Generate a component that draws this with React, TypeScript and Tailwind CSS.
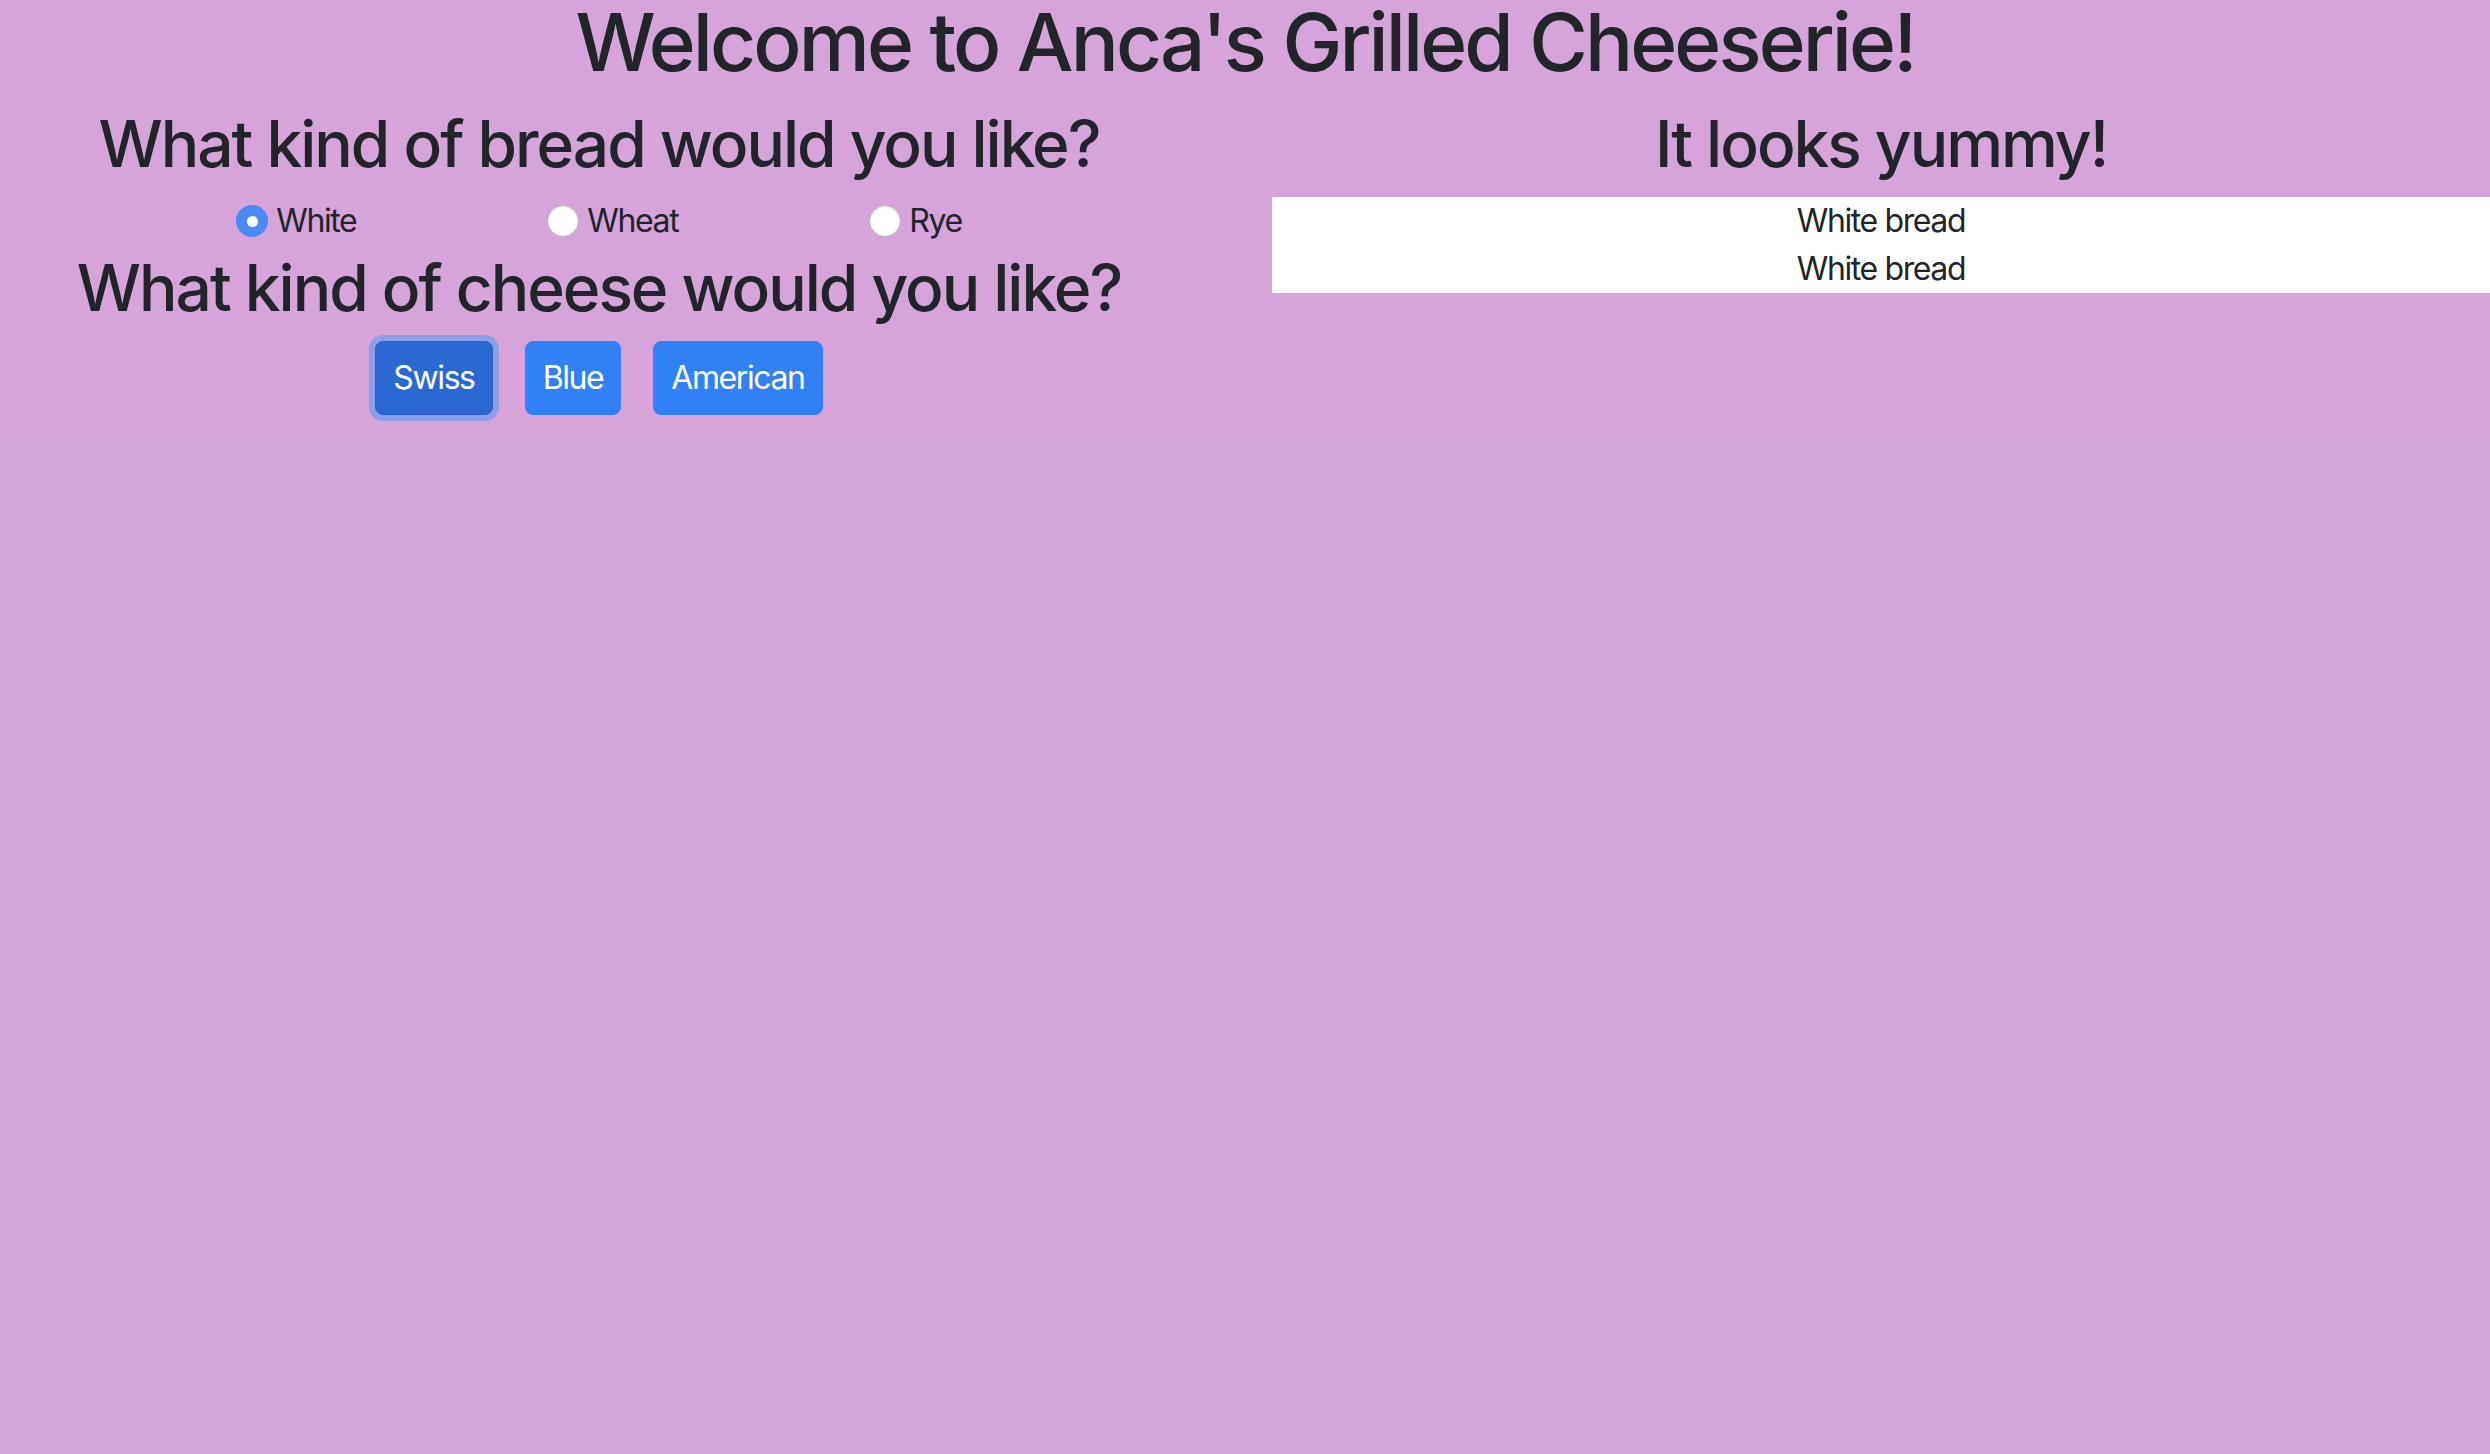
import React from 'react';

const breads = ['White', 'Wheat', 'Rye'];
const cheeses = ['Swiss', 'Blue', 'American'];

function Radio({ label, checked }: { label: string; checked: boolean }) {
  return (
    <label className="flex items-center gap-[8px]">
      {checked ? (
        <span className="flex h-[32px] w-[32px] items-center justify-center rounded-full bg-[#4a8af4]">
          <span className="h-[11px] w-[11px] rounded-full bg-white" />
        </span>
      ) : (
        <span className="h-[32px] w-[32px] rounded-full border border-[#b9b2bb] bg-white shadow-[inset_0_1px_2px_rgba(0,0,0,0.12)]" />
      )}
      <span>{label}</span>
    </label>
  );
}

export default function App() {
  return (
    <div
      className="min-h-screen bg-[#d3a4d8] text-[#212529]"
      style={{ fontFamily: 'Inter, "Liberation Sans", sans-serif' }}
    >
      <div className="bg-[#d6a3da] pb-[22px]">
        <h1 className="text-center text-[80px] font-medium leading-[84px] tracking-[-2.9px]">
          Welcome to Anca's Grilled Cheeserie!
        </h1>
        <div className="flex">
          <div className="flex w-[1198px] flex-col items-center">
            <h2 className="mt-[28px] text-[64px] font-medium leading-[64px] tracking-[-2px]">
              What kind of bread would you like?
            </h2>
            <div className="mt-[21px] flex h-[48px] items-center gap-[191px] text-[32px] leading-[48px] tracking-[-1.4px]">
              {breads.map((b, i) => (
                <Radio key={b} label={b} checked={i === 0} />
              ))}
            </div>
            <h2 className="mt-[11px] text-[64px] font-medium leading-[64px] tracking-[-2px]">
              What kind of cheese would you like?
            </h2>
            <div className="mt-[21px] flex gap-[32px]">
              {cheeses.map((c, i) => (
                <button
                  key={c}
                  className={
                    i === 0
                      ? 'rounded-[8px] border border-[#2762c8] bg-[#2a69d3] px-[17px] py-[12px] text-[32px] leading-[48px] tracking-[-1.4px] text-white shadow-[0_0_0_6px_#8c9eea]'
                      : 'rounded-[8px] border border-[#3280f6] bg-[#3280f6] px-[17px] py-[12px] text-[32px] leading-[48px] tracking-[-1.4px] text-white'
                  }
                >
                  {c}
                </button>
              ))}
            </div>
          </div>
          <div className="ml-[74px] flex flex-1 flex-col items-center">
            <h2 className="mt-[28px] text-[64px] font-medium leading-[64px] tracking-[-2px]">
              It looks yummy!
            </h2>
            <div className="mt-[21px] w-full bg-white text-center text-[32px] leading-[48px] tracking-[-1.4px]">
              <div>White bread</div>
              <div>White bread</div>
            </div>
          </div>
        </div>
      </div>
    </div>
  );
}
